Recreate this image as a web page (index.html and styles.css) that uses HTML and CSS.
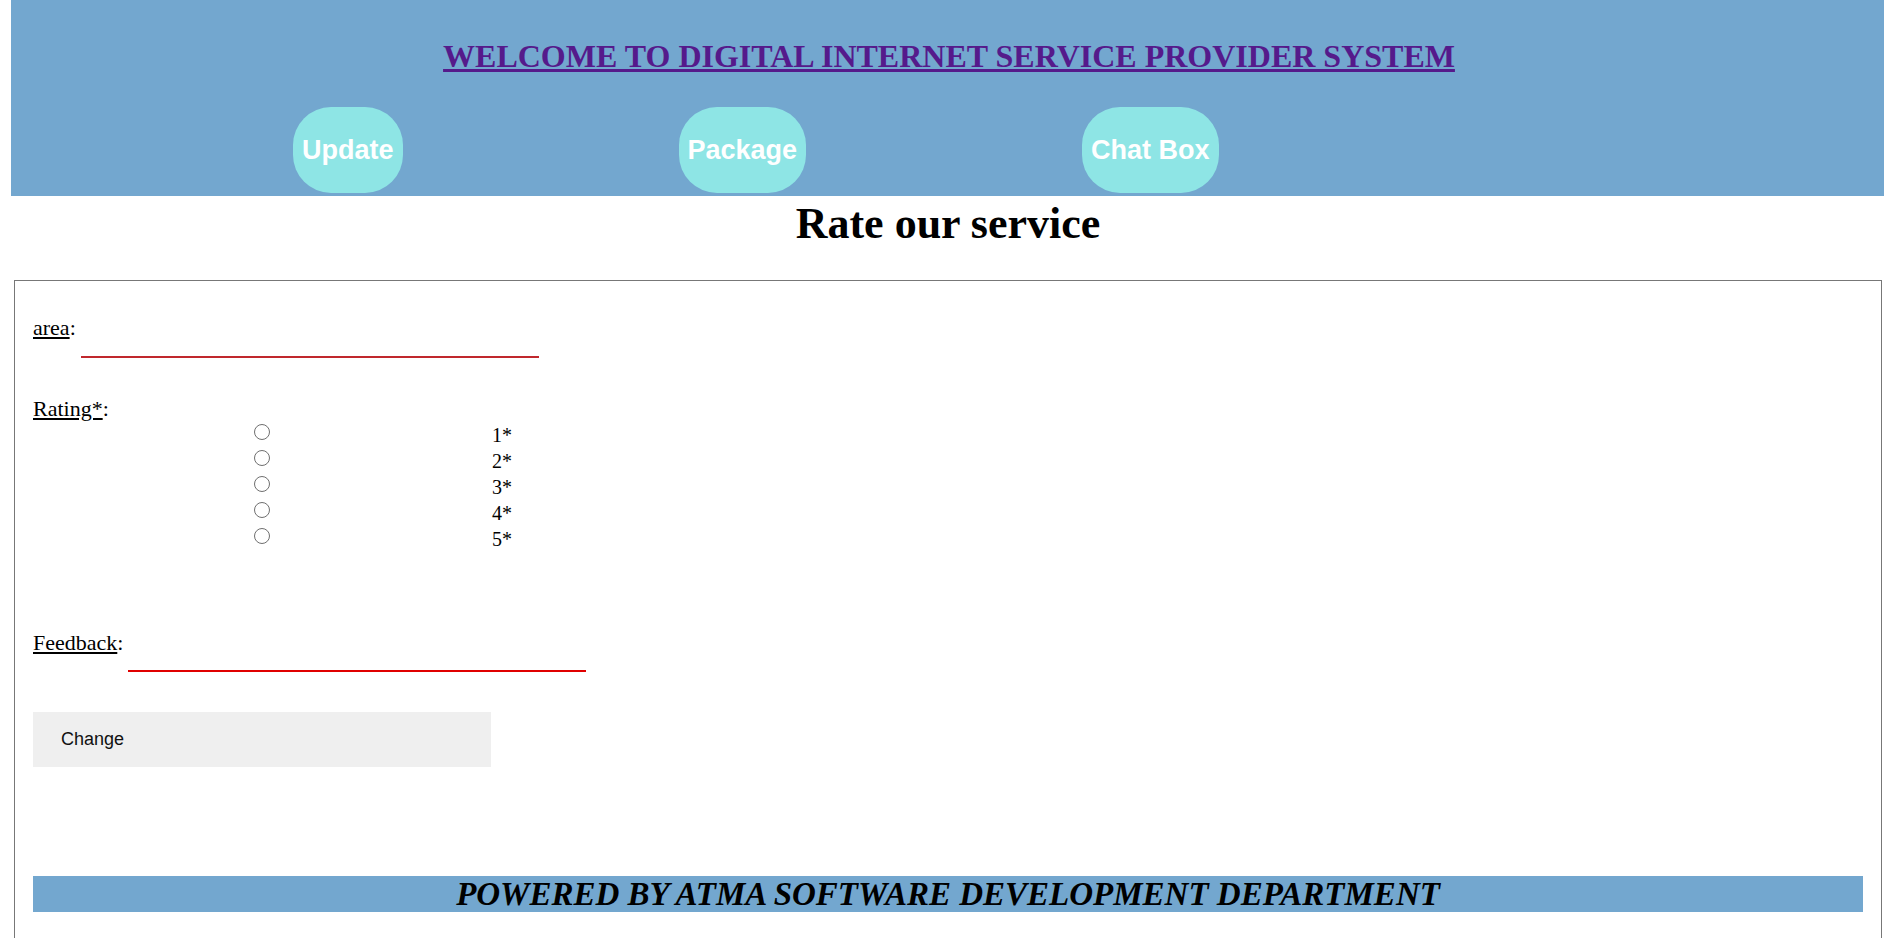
FILE: index.html
```html
<!DOCTYPE html>
<html lang="en">
<head>
<meta charset="utf-8">
<title>Rate our service</title>
<link rel="stylesheet" href="styles.css">
</head>
<body>
<header class="top">
  <h1 class="site-title"><a class="site-link" href="#">WELCOME TO DIGITAL INTERNET SERVICE PROVIDER SYSTEM</a></h1>
  <nav class="nav">
    <a class="nav-btn" href="#">Update</a>
    <a class="nav-btn" href="#">Package</a>
    <a class="nav-btn" href="#">Chat Box</a>
  </nav>
</header>
<main class="main">
  <h1 class="page-title">Rate our service</h1>
  <form class="rate-form">
    <div class="field">
      <label class="lbl"><span class="ul">area</span>:</label>
      <input class="line-input area-input" type="text">
    </div>
    <div class="lbl rating-lbl"><span class="ul">Rating*</span>:</div>
    <div class="radios">
      <input class="radio" type="radio" name="rating"><span class="rlabel">1*</span>
      <input class="radio" type="radio" name="rating"><span class="rlabel">2*</span>
      <input class="radio" type="radio" name="rating"><span class="rlabel">3*</span>
      <input class="radio" type="radio" name="rating"><span class="rlabel">4*</span>
      <input class="radio" type="radio" name="rating"><span class="rlabel">5*</span>
    </div>
    <div class="field feedback">
      <label class="lbl"><span class="ul">Feedback</span>:</label>
      <input class="line-input feedback-input" type="text">
    </div>
    <button class="change" type="button">Change</button>
    <div class="footer">POWERED BY ATMA SOFTWARE DEVELOPMENT DEPARTMENT</div>
  </form>
</main>
</body>
</html>
```

FILE: styles.css
```css
html, body {
  margin: 0;
}
body {
  padding-left: 11px;
  font-family: "Liberation Serif", "Times New Roman", serif;
  background: #fff;
  color: #000;
}
.top {
  background: #73a7cf;
  padding: 38px 0 3px;
}
.site-title {
  margin: 0;
  padding-left: 3px;
  text-align: center;
  font-size: 32px;
  line-height: 37px;
  font-weight: bold;
}
.site-link {
  color: #551a8b;
  text-decoration: underline;
}
.nav {
  display: flex;
  gap: 276px;
  padding-left: 282px;
  margin-top: 32px;
}
.nav-btn {
  background: #8ee5e5;
  color: #fff;
  font-family: "Liberation Sans", Arial, sans-serif;
  font-weight: bold;
  font-size: 27px;
  line-height: 32px;
  padding: 27px 9px;
  border-radius: 38px;
  text-decoration: none;
}
.main {
  padding-left: 3px;
  padding-right: 2px;
}
.page-title {
  margin: 3px 0 31px;
  text-align: center;
  font-size: 44px;
  line-height: 50px;
  font-weight: bold;
}
.rate-form {
  border: 1px solid #777;
  padding: 34px 18px 60px;
}
.field {
  display: flex;
  align-items: flex-start;
  gap: 5px;
}
.lbl {
  font-size: 22px;
  line-height: 25px;
}
.ul {
  text-decoration: underline;
}
.line-input {
  width: 458px;
  height: 43px;
  box-sizing: border-box;
  border: none;
  border-bottom: 2px solid #c0282d;
  padding: 0;
  margin: 0;
  background: transparent;
  outline: none;
}
.feedback-input {
  height: 42px;
  border-bottom-color: #e00000;
}
.rating-lbl {
  margin-top: 38px;
}
.radios {
  display: grid;
  grid-template-columns: 458px auto;
  grid-auto-rows: 26px;
  column-gap: 1px;
  justify-content: start;
  margin-top: -2px;
}
.radio {
  appearance: none;
  -webkit-appearance: none;
  width: 16px;
  height: 16px;
  box-sizing: border-box;
  border: 1px solid #6f6f6f;
  border-radius: 50%;
  margin: 0;
  justify-self: center;
  align-self: center;
  background: #fff;
}
.rlabel {
  font-size: 20px;
  line-height: 23px;
  padding-top: 5px;
}
.feedback {
  margin-top: 81px;
}
.change {
  display: block;
  width: 458px;
  height: 55px;
  margin-top: 40px;
  padding: 0 28px;
  border: none;
  background: #efefef;
  text-align: left;
  font-family: "Liberation Sans", Arial, sans-serif;
  font-size: 18px;
  color: #111;
}
.footer {
  margin-top: 109px;
  background: #73a7cf;
  text-align: center;
  font-size: 33px;
  line-height: 36px;
  font-weight: bold;
  font-style: italic;
}
```
